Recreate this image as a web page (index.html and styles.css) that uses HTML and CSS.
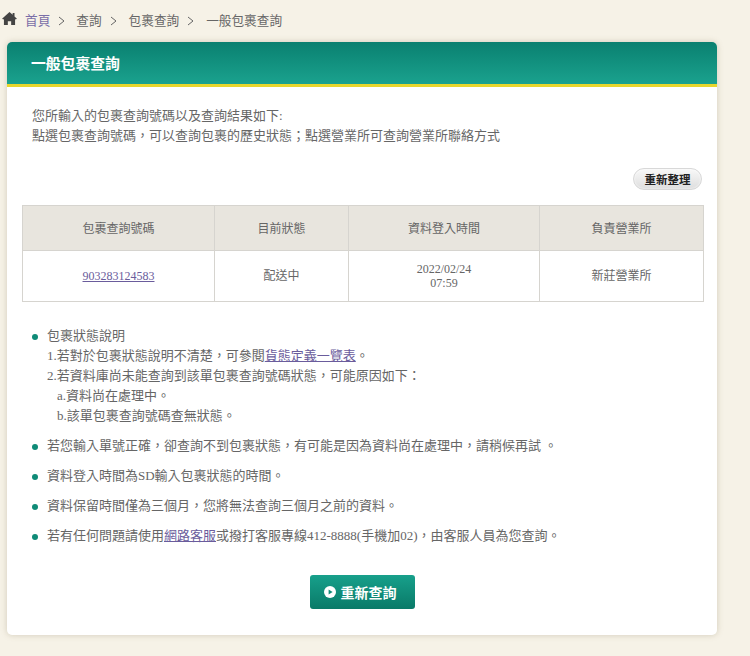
FILE: index.html
```html
<!DOCTYPE html>
<html lang="zh-Hant">
<head>
    <meta charset="UTF-8">
    <title>一般包裹查詢</title>
    <link rel="stylesheet" href="styles.css">
</head>
<body>
<main>
  <div class="crumbs">
    <svg class="home-icon" viewBox="0 0 16 14" width="15" height="13"><path d="M8 0 L11.4 3 L11.4 1 L13.4 1 L13.4 4.8 L16 7.2 L14.6 8 L14 7.6 L14 14 L9.8 14 L9.8 10 L6.2 10 L6.2 14 L2 14 L2 7.6 L1.4 8 L0 7.2 Z" fill="#444"/></svg>
    <a href="#" class="crumb-home">首頁</a>
    <svg class="sep" viewBox="0 0 7 10" width="7" height="10"><path d="M1 1 L6 5 L1 9" fill="none" stroke="#666"/></svg>
    <span class="crumb-a">查詢</span>
    <svg class="sep" viewBox="0 0 7 10" width="7" height="10"><path d="M1 1 L6 5 L1 9" fill="none" stroke="#666"/></svg>
    <span class="crumb-b">包裹查詢</span>
    <svg class="sep" viewBox="0 0 7 10" width="7" height="10"><path d="M1 1 L6 5 L1 9" fill="none" stroke="#666"/></svg>
    <span class="crumb-c">一般包裹查詢</span>
  </div>

  <section class="card">
    <h1 class="card-title">一般包裹查詢</h1>
    <div class="card-body">
      <p class="intro">您所輸入的包裹查詢號碼以及查詢結果如下:<br>點選包裹查詢號碼&#xFF0C;可以查詢包裹的歷史狀態&#xFF1B;點選營業所可查詢營業所聯絡方式</p>

      <div class="refresh-row">
        <button class="refresh-btn">重新整理</button>
      </div>

      <table class="result">
        <thead>
          <tr>
            <th class="col1">包裹查詢號碼</th>
            <th class="col2">目前狀態</th>
            <th class="col3">資料登入時間</th>
            <th class="col4">負責營業所</th>
          </tr>
        </thead>
        <tbody>
          <tr>
            <td><a href="#">903283124583</a></td>
            <td>配送中</td>
            <td>2022/02/24<br>07:59</td>
            <td>新莊營業所</td>
          </tr>
        </tbody>
      </table>

      <ul class="notes">
        <li>包裹狀態說明
          <div>1.若對於包裹狀態說明不清楚&#xFF0C;可參閱<a href="#">貨態定義一覽表</a>。</div>
          <div>2.若資料庫尚未能查詢到該單包裹查詢號碼狀態&#xFF0C;可能原因如下&#xFF1A;</div>
          <div class="sub">a.資料尚在處理中。</div>
          <div class="sub">b.該單包裹查詢號碼查無狀態。</div>
        </li>
        <li>若您輸入單號正確&#xFF0C;卻查詢不到包裹狀態&#xFF0C;有可能是因為資料尚在處理中&#xFF0C;請稍候再試 。</li>
        <li>資料登入時間為SD輸入包裹狀態的時間。</li>
        <li>資料保留時間僅為三個月&#xFF0C;您將無法查詢三個月之前的資料。</li>
        <li>若有任何問題請使用<a href="#">網路客服</a>或撥打客服專線412-8888(手機加02)&#xFF0C;由客服人員為您查詢。</li>
      </ul>

      <div class="submit-row">
        <button class="again-btn">
          <svg viewBox="0 0 12 12" width="12" height="12"><circle cx="6" cy="6" r="6" fill="#fff"/><path d="M4.6 3.4 L8.6 6 L4.6 8.6 Z" fill="#0f8b77"/></svg>
          重新查詢
        </button>
      </div>
    </div>
  </section>
</main>
</body>
</html>
```

FILE: styles.css
```css
* {
  margin: 0;
  padding: 0;
  box-sizing: border-box;
}

body {
  background-color: #f6f2e7;
  color: #666;
  font-family: "Liberation Serif", "Noto Sans CJK TC", serif;
  font-size: 13px;
}

main {
  width: 750px;
  height: 656px;
  overflow: hidden;
}

a {
  color: #6a5c9c;
}

.crumbs {
  display: flex;
  align-items: center;
  height: 42px;
  padding: 0 0 4px 2px;
  font-family: "Noto Sans CJK TC", sans-serif;
  font-size: 12.65px;
}

.home-icon {
  margin-top: -1px;
}

.crumb-home {
  margin-left: 8px;
  color: #7a6ea8;
  text-decoration: none;
}

.sep {
  margin: 3px 12px 0 8px;
}

.crumb-a {
  margin-left: -1px;
}

.card {
  width: 710px;
  height: 593px;
  margin-left: 7px;
  background-color: #fff;
  border-radius: 5px;
  box-shadow: 0 0 6px rgba(120, 105, 70, 0.28);
}

.card-title {
  height: 45px;
  padding: 0 0 3px 24px;
  border-bottom: 3px solid #e8d62c;
  border-radius: 5px 5px 0 0;
  background: linear-gradient(#0a8070, #1aa28e);
  color: #fff;
  font-family: "Noto Sans CJK TC", sans-serif;
  font-size: 14.8px;
  font-weight: 700;
  line-height: 42px;
}

.card-body {
  padding: 0 13px 0 15px;
}

.intro {
  padding: 19px 0 0 10px;
  line-height: 20px;
}

.refresh-row {
  display: flex;
  justify-content: flex-end;
  padding: 22px 2px 15px 0;
}

.refresh-btn {
  width: 69px;
  height: 22px;
  border: 1px solid #d8d8d8;
  border-radius: 11px;
  background: linear-gradient(#f8f8f8, #dedede);
  box-shadow: inset 0 0 2px #fff;
  color: #222;
  font-family: "Noto Sans CJK TC", sans-serif;
  font-size: 11.5px;
  font-weight: 700;
}

.result {
  width: 682px;
  border-collapse: collapse;
  table-layout: fixed;
  font-size: 12px;
  text-align: center;
}

.result th,
.result td {
  border: 1px solid #d6d4cf;
}

.result th {
  height: 45px;
  background-color: #e8e5de;
  font-weight: 400;
}

.result td {
  height: 51px;
  line-height: 14px;
}

.col1 { width: 192px; }
.col2 { width: 134px; }
.col3 { width: 191px; }

.notes {
  margin: 24px 0 0 25px;
  line-height: 20px;
  list-style: none;
}

.notes li {
  position: relative;
  margin-bottom: 10px;
}

.notes li::before {
  content: "";
  position: absolute;
  left: -15px;
  top: 8px;
  width: 6px;
  height: 6px;
  border-radius: 50%;
  background-color: #0f8b77;
}

.notes .sub {
  padding-left: 10px;
}

.submit-row {
  display: flex;
  justify-content: center;
  padding: 19px 2px 0 0;
}

.again-btn {
  display: flex;
  align-items: center;
  justify-content: center;
  gap: 5px;
  width: 105px;
  height: 34px;
  padding-right: 4px;
  border: none;
  border-radius: 3px;
  background: linear-gradient(#17a08b, #0a7a68);
  color: #fff;
  font-family: "Noto Sans CJK TC", sans-serif;
  font-size: 14px;
  font-weight: 700;
}
```
